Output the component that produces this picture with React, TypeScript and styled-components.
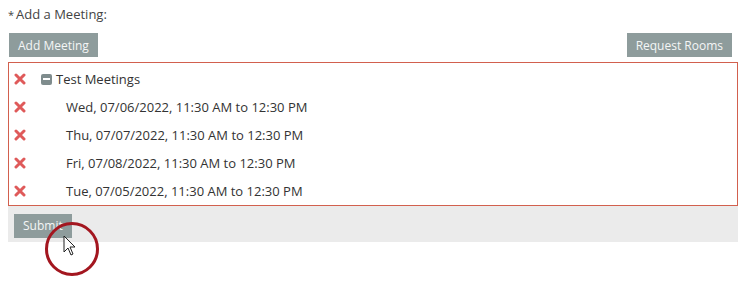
import * as React from "react";
import styled, { createGlobalStyle } from "styled-components";

const GlobalStyle = createGlobalStyle`
  body {
    margin: 0;
    background: #fff;
    font-family: "Open Sans", "Liberation Sans", sans-serif;
    color: #333;
  }
`;

const Page = styled.div`
  position: relative;
  width: 746px;
  height: 288px;
  padding: 4px 8px 0 8px;
  box-sizing: border-box;
`;

const Label = styled.div`
  font-size: 13px;
  line-height: 20px;
  color: #444;
  height: 20px;
`;

const Star = styled.span`
  font-size: 11px;
  margin-right: 2px;
`;

const Toolbar = styled.div`
  display: flex;
  justify-content: space-between;
  margin-top: 9px;
  padding: 0 6px 0 1px;
`;

const Button = styled.button`
  font-family: "Open Sans", "Liberation Sans", sans-serif;
  font-size: 12px;
  height: 24px;
  padding: 0 9px;
  background: #8e9c9c;
  color: #f4f6f6;
  border: none;
  border-radius: 0;
`;

const MeetingBox = styled.div`
  margin-top: 5px;
  width: 730px;
  box-sizing: border-box;
  border: 1px solid #d2604e;
  padding: 2px 0 0 0;
`;

const Row = styled.div<{ $indent: number }>`
  display: flex;
  align-items: center;
  height: 28px;
  font-size: 13px;
  color: #333;
  padding-left: 5px;
  & > span.text {
    margin-left: ${(p) => p.$indent}px;
  }
`;

const RemoveIcon = styled.span`
  width: 12px;
  height: 12px;
  display: inline-flex;
`;

const CollapseIcon = styled.span`
  width: 11px;
  height: 11px;
  background: #7f8c8d;
  border-radius: 2px;
  margin-left: 15px;
  display: inline-flex;
  align-items: center;
  justify-content: center;
  &::after {
    content: "";
    width: 7px;
    height: 2px;
    background: #fff;
  }
`;

const Footer = styled.div`
  width: 730px;
  height: 36px;
  background: #ebebeb;
  padding: 7px 0 0 6px;
  box-sizing: border-box;
`;

const Circle = styled.div`
  position: absolute;
  left: 45px;
  top: 222px;
  width: 48px;
  height: 48px;
  border: 3px solid #a3161f;
  border-radius: 50%;
`;

const Cursor = styled.svg`
  position: absolute;
  left: 63px;
  top: 235px;
`;

const X = () => (
  <RemoveIcon>
    <svg width="12" height="12" viewBox="0 0 12 12">
      <path d="M2 2 L10 10 M10 2 L2 10" stroke="#df5a5a" strokeWidth="3" strokeLinecap="round" />
    </svg>
  </RemoveIcon>
);

const meetings = [
  "Wed, 07/06/2022, 11:30 AM to 12:30 PM",
  "Thu, 07/07/2022, 11:30 AM to 12:30 PM",
  "Fri, 07/08/2022, 11:30 AM to 12:30 PM",
  "Tue, 07/05/2022, 11:30 AM to 12:30 PM",
];

export default function App() {
  return (
    <Page>
      <GlobalStyle />
      <Label>
        <Star>*</Star>Add a Meeting:
      </Label>
      <Toolbar>
        <Button>Add Meeting</Button>
        <Button>Request Rooms</Button>
      </Toolbar>
      <MeetingBox>
        <Row $indent={4}>
          <X />
          <CollapseIcon />
          <span className="text">Test Meetings</span>
        </Row>
        {meetings.map((m) => (
          <Row key={m} $indent={40}>
            <X />
            <span className="text">{m}</span>
          </Row>
        ))}
      </MeetingBox>
      <Footer>
        <Button>Submit</Button>
      </Footer>
      <Circle />
      <Cursor width="14" height="22" viewBox="0 0 14 22">
        <path d="M1 1 L1 17 L5 13 L8 20 L10 19 L7 12 L12 12 Z" fill="#fff" stroke="#222" strokeWidth="1" strokeLinejoin="round" />
      </Cursor>
    </Page>
  );
}
